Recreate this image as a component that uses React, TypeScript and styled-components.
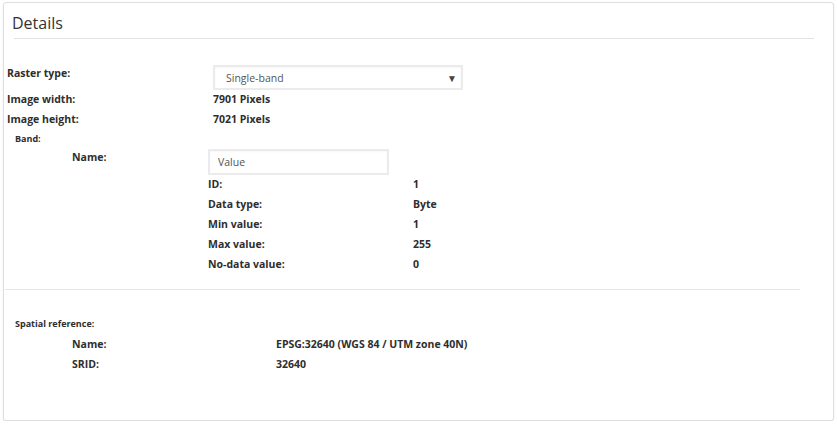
import React from "react";
import styled, { createGlobalStyle } from "styled-components";

const Global = createGlobalStyle`
  html, body { margin: 0; padding: 0; background: #fff; }
  body { font-family: "Open Sans", "Noto Sans", sans-serif; color: #333; }
  * { box-sizing: border-box; }
`;

const Page = styled.div`
  padding: 2px 3px 0 3px;
  width: 837px;
`;

const Panel = styled.section`
  width: 831px;
  height: 419px;
  border: 1px solid #dedede;
  border-radius: 3px;
  box-shadow: 0 1px 2px rgba(0, 0, 0, 0.08);
  background: #fff;
  padding: 0 0 0 3px;
`;

const Header = styled.div`
  margin: 0 19px 0 7px;
  height: 36px;
  border-bottom: 1px solid #e3e3e3;
  display: flex;
  align-items: flex-end;
`;

const Title = styled.h2`
  margin: 0 0 3px -2px;
  font-size: 16px;
  font-weight: 400;
  line-height: 24px;
  color: #333;
`;

const Grid = styled.div<{ $cols: string; $indent?: number; $h?: number; $top?: number }>`
  display: grid;
  grid-template-columns: ${(p) => p.$cols};
  align-items: start;
  padding-left: ${(p) => p.$indent ?? 0}px;
  height: ${(p) => (p.$h ? `${p.$h}px` : "20px")};
  margin-top: ${(p) => p.$top ?? 0}px;
`;

const Label = styled.div`
  font-size: 10.5px;
  font-weight: 700;
  line-height: 20px;
  color: #2e2e2e;
  white-space: nowrap;
`;

const Value = styled(Label)``;

const SubTitle = styled.div<{ $top?: number; $bottom?: number }>`
  font-size: 9px;
  font-weight: 700;
  line-height: 20px;
  height: 18px;
  padding-left: 8px;
  margin-top: ${(p) => p.$top ?? 0}px;
  margin-bottom: ${(p) => p.$bottom ?? 0}px;
  color: #2e2e2e;
`;

const Select = styled.div`
  margin-top: 2px;
  width: 250px;
  height: 25px;
  border: 2px solid #ebebeb;
  background: #fff;
  box-shadow: inset 0 1px 2px rgba(0, 0, 0, 0.04);
  display: flex;
  align-items: center;
  justify-content: space-between;
  padding: 0 4px 0 11px;
  font-size: 10.5px;
  color: #555;
`;

const Arrow = styled.span`
  font-size: 10px;
  color: #444;
  line-height: 1;
`;

const TextBox = styled.div`
  margin-top: 2px;
  width: 181px;
  height: 26px;
  border: 2px solid #ebebeb;
  box-shadow: inset 0 1px 2px rgba(0, 0, 0, 0.04);
  display: flex;
  align-items: center;
  padding-left: 8px;
  font-size: 10.5px;
  color: #555;
`;

const Divider = styled.hr<{ $top: number }>`
  border: 0;
  border-top: 1px solid #e6e6e6;
  margin: ${(p) => p.$top}px 33px 0 -2px;
  height: 0;
`;

const bandRows: [string, string][] = [
  ["ID:", "1"],
  ["Data type:", "Byte"],
  ["Min value:", "1"],
  ["Max value:", "255"],
  ["No-data value:", "0"],
];

export default function App() {
  return (
    <>
      <Global />
      <Page>
        <Panel>
          <Header>
            <Title>Details</Title>
          </Header>
          <Grid $cols="206px 1fr" $h={26} $top={24}>
            <Label>Raster type:</Label>
            <Select>
              <span>Single-band</span>
              <Arrow>▼</Arrow>
            </Select>
          </Grid>
          <Grid $cols="206px 1fr">
            <Label>Image width:</Label>
            <Value>7901 Pixels</Value>
          </Grid>
          <Grid $cols="206px 1fr">
            <Label>Image height:</Label>
            <Value>7021 Pixels</Value>
          </Grid>
          <SubTitle>Band:</SubTitle>
          <Grid $cols="136px 1fr" $indent={65} $h={27}>
            <Label>Name:</Label>
            <TextBox>Value</TextBox>
          </Grid>
          {bandRows.map(([k, v]) => (
            <Grid key={k} $cols="205px 1fr" $indent={201}>
              <Label>{k}</Label>
              <Value>{v}</Value>
            </Grid>
          ))}
          <Divider $top={15} />
          <SubTitle $top={24} $bottom={2}>Spatial reference:</SubTitle>
          <Grid $cols="204px 1fr" $indent={65}>
            <Label>Name:</Label>
            <Value>EPSG:32640 (WGS 84 / UTM zone 40N)</Value>
          </Grid>
          <Grid $cols="204px 1fr" $indent={65}>
            <Label>SRID:</Label>
            <Value>32640</Value>
          </Grid>
        </Panel>
      </Page>
    </>
  );
}
